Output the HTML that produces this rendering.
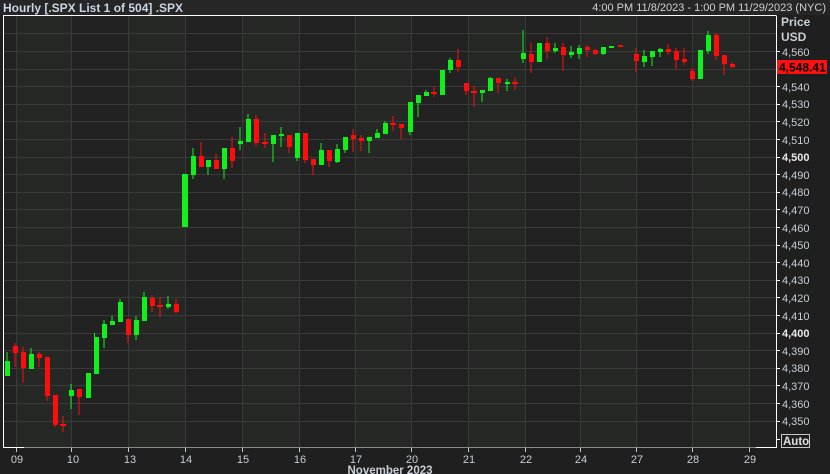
<!DOCTYPE html>
<html><head><meta charset="utf-8"><style>
html,body{margin:0;padding:0;background:#1f1f1f;width:830px;height:474px;overflow:hidden;font-family:"Liberation Sans",sans-serif}
svg{display:block}
</style></head><body>
<svg width="830" height="474" viewBox="0 0 830 474" xmlns="http://www.w3.org/2000/svg" font-family="Liberation Sans, sans-serif">
<rect width="830" height="474" fill="#1f1f1f"/>
<rect x="0" y="0" width="830" height="15" fill="#262626"/>
<text x="3" y="12" font-size="12" font-weight="bold" fill="#c9d6e3">Hourly [.SPX List 1 of 504] .SPX</text>
<text x="826" y="11" font-size="11" fill="#d0d0d0" text-anchor="end">4:00 PM 11/8/2023 - 1:00 PM 11/29/2023 (NYC)</text>
<!-- plot bg -->
<rect x="3" y="15" width="773" height="432" fill="#222222"/>
<g fill="#252825">
<rect x="16" y="16" width="55" height="431"/>
<rect x="128" y="16" width="57" height="431"/>
<rect x="242" y="16" width="57" height="431"/>
<rect x="355" y="16" width="56" height="431"/>
<rect x="468" y="16" width="57" height="431"/>
<rect x="580" y="16" width="56" height="431"/>
<rect x="692" y="16" width="57" height="431"/>
</g>
<g stroke="#3a3a3a" stroke-width="1">
<path d="M3 51.5H776M3 69.5H776M3 86.5H776M3 104.5H776M3 121.5H776M3 139.5H776M3 157.5H776M3 174.5H776M3 192.5H776M3 209.5H776M3 227.5H776M3 245.5H776M3 262.5H776M3 280.5H776M3 297.5H776M3 315.5H776M3 333.5H776M3 350.5H776M3 368.5H776M3 385.5H776M3 403.5H776M3 421.5H776M3 33.5H776"/>
<path d="M16.5 15V447M71.5 15V447M128.5 15V447M185.5 15V447M242.5 15V447M299.5 15V447M355.5 15V447M411.5 15V447M468.5 15V447M525.5 15V447M580.5 15V447M636.5 15V447M692.5 15V447M749.5 15V447"/>
</g>
<!-- frame -->
<path d="M3.5 15V447.5H776.5V15.5" stroke="#8a8a8a" fill="none"/>
<path d="M3.5 447V15.5H24" stroke="#ffffff" fill="none"/>
<path d="M3 447.5H24M3.5 447V15" stroke="#ffffff" fill="none"/>
<path d="M756 447.5H776.5V15.5M24 15.5H776" stroke="#ffffff" fill="none" stroke-width="1"/>
<!-- candles green -->
<g fill="#11f01c">
<g id="g"></g>
</g>
<g fill="#11f01c">
<rect x="6.5" y="352" width="1" height="24"/><rect x="5" y="361" width="5" height="15"/>
<rect x="30.5" y="348" width="1" height="21"/><rect x="29" y="354" width="5" height="15"/>
<rect x="70.5" y="384" width="1" height="25"/><rect x="69" y="390" width="5" height="6"/>
<rect x="86" y="373" width="5" height="25"/>
<rect x="94" y="333" width="1" height="41"/><rect x="94" y="337" width="5" height="37"/>
<rect x="103.5" y="320" width="1" height="28"/><rect x="102" y="324" width="5" height="14"/>
<rect x="111.5" y="316" width="1" height="9"/><rect x="110" y="321" width="5" height="4"/>
<rect x="119.5" y="299" width="1" height="23"/><rect x="118" y="302" width="5" height="20"/>
<rect x="135.5" y="316" width="1" height="24"/><rect x="134" y="320" width="5" height="15"/>
<rect x="143.5" y="292" width="1" height="29"/><rect x="142" y="297" width="5" height="24"/>
<rect x="167.5" y="296" width="1" height="13"/><rect x="166" y="304" width="5" height="3"/>
<rect x="182" y="174" width="6" height="53"/>
<rect x="192.5" y="148" width="1" height="31"/><rect x="191" y="156" width="5" height="19"/>
<rect x="207.5" y="160" width="1" height="15"/><rect x="206" y="160" width="5" height="7"/>
<rect x="223.5" y="148" width="1" height="31"/><rect x="222" y="148" width="5" height="21"/>
<rect x="239.5" y="127" width="1" height="23"/><rect x="238" y="141" width="5" height="3"/>
<rect x="247.5" y="114" width="1" height="28"/><rect x="246" y="119" width="5" height="23"/>
<rect x="272.5" y="135" width="1" height="27"/><rect x="271" y="135" width="5" height="9"/>
<rect x="280.5" y="127" width="1" height="20"/><rect x="279" y="134" width="5" height="2"/>
<rect x="296.5" y="133" width="1" height="28"/><rect x="295" y="133" width="5" height="25"/>
<rect x="320.5" y="143" width="1" height="22"/><rect x="319" y="150" width="5" height="15"/>
<rect x="336.5" y="144" width="1" height="19"/><rect x="335" y="149" width="5" height="13"/>
<rect x="344.5" y="137" width="1" height="16"/><rect x="343" y="137" width="5" height="13"/>
<rect x="368.5" y="137" width="1" height="16"/><rect x="367" y="137" width="5" height="4"/>
<rect x="376.5" y="129" width="1" height="9"/><rect x="375" y="133" width="5" height="5"/>
<rect x="384.5" y="121" width="1" height="13"/><rect x="383" y="123" width="5" height="11"/>
<rect x="409.5" y="102" width="1" height="33"/><rect x="408" y="102" width="5" height="30"/>
<rect x="417.5" y="95" width="1" height="22"/><rect x="416" y="95" width="5" height="8"/>
<rect x="425.5" y="90" width="1" height="6"/><rect x="424" y="92" width="5" height="4"/>
<rect x="440" y="70" width="5" height="25"/>
<rect x="449.5" y="58" width="1" height="15"/><rect x="448" y="60" width="5" height="10"/>
<rect x="481.5" y="90" width="1" height="12"/><rect x="480" y="90" width="5" height="3"/>
<rect x="489.5" y="77" width="1" height="14"/><rect x="488" y="78" width="5" height="13"/>
<rect x="506.5" y="79" width="1" height="12"/><rect x="505" y="82" width="5" height="2"/>
<rect x="522.5" y="30" width="1" height="33"/><rect x="521" y="53" width="5" height="6"/>
<rect x="537" y="43" width="5" height="19"/>
<rect x="554.5" y="43" width="1" height="10"/><rect x="553" y="48" width="5" height="3"/>
<rect x="570.5" y="46" width="1" height="12"/><rect x="569" y="52" width="5" height="3"/>
<rect x="578.5" y="45" width="1" height="14"/><rect x="577" y="48" width="5" height="6"/>
<rect x="602.5" y="47" width="1" height="8"/><rect x="601" y="47" width="5" height="7"/>
<rect x="609" y="46" width="5" height="2"/>
<rect x="643.5" y="50" width="1" height="17"/><rect x="642" y="56" width="5" height="6"/>
<rect x="651.5" y="51" width="1" height="15"/><rect x="650" y="51" width="5" height="6"/>
<rect x="659.5" y="48" width="1" height="9"/><rect x="658" y="49" width="5" height="3"/>
<rect x="698" y="50" width="5" height="29"/>
<rect x="707.5" y="31" width="1" height="23"/><rect x="706" y="35" width="5" height="16"/>
</g>
<g fill="#ff0d0d">
<rect x="14.5" y="343" width="1" height="24"/><rect x="13" y="346" width="5" height="7"/>
<rect x="22.5" y="347" width="1" height="36"/><rect x="21" y="352" width="5" height="16"/>
<rect x="38.5" y="352" width="1" height="15"/><rect x="37" y="354" width="5" height="4"/>
<rect x="46.5" y="357" width="1" height="44"/><rect x="45" y="357" width="5" height="39"/>
<rect x="54.5" y="395" width="1" height="32"/><rect x="53" y="395" width="5" height="30"/>
<rect x="62.5" y="416" width="1" height="16"/><rect x="60" y="424" width="6" height="2"/>
<rect x="78.5" y="389" width="1" height="26"/><rect x="77" y="389" width="5" height="8"/>
<rect x="127.5" y="319" width="1" height="24"/><rect x="126" y="319" width="5" height="16"/>
<rect x="151.5" y="295" width="1" height="17"/><rect x="150" y="298" width="5" height="8"/>
<rect x="159.5" y="297" width="1" height="20"/><rect x="157" y="305" width="6" height="2"/>
<rect x="175.5" y="299" width="1" height="15"/><rect x="174" y="304" width="5" height="8"/>
<rect x="200.5" y="142" width="1" height="25"/><rect x="199" y="156" width="5" height="11"/>
<rect x="215.5" y="154" width="1" height="15"/><rect x="214" y="160" width="5" height="9"/>
<rect x="231.5" y="137" width="1" height="31"/><rect x="230" y="148" width="5" height="13"/>
<rect x="255.5" y="115" width="1" height="31"/><rect x="254" y="119" width="5" height="24"/>
<rect x="264.5" y="133" width="1" height="15"/><rect x="262" y="142" width="6" height="2"/>
<rect x="288.5" y="135" width="1" height="18"/><rect x="287" y="135" width="5" height="12"/>
<rect x="304.5" y="133" width="1" height="30"/><rect x="303" y="133" width="5" height="27"/>
<rect x="312.5" y="159" width="1" height="16"/><rect x="311" y="159" width="5" height="6"/>
<rect x="328.5" y="150" width="1" height="17"/><rect x="327" y="150" width="5" height="11"/>
<rect x="352.5" y="129" width="1" height="23"/><rect x="351" y="135" width="5" height="4"/>
<rect x="360.5" y="135" width="1" height="16"/><rect x="359" y="138" width="5" height="3"/>
<rect x="392.5" y="116" width="1" height="15"/><rect x="390" y="123" width="6" height="2"/>
<rect x="400.5" y="124" width="1" height="15"/><rect x="399" y="124" width="5" height="4"/>
<rect x="433.5" y="87" width="1" height="10"/><rect x="431" y="92" width="6" height="2"/>
<rect x="457.5" y="49" width="1" height="23"/><rect x="456" y="60" width="5" height="7"/>
<rect x="465.5" y="83" width="1" height="12"/><rect x="464" y="83" width="5" height="8"/>
<rect x="473.5" y="86" width="1" height="21"/><rect x="471" y="91" width="6" height="2"/>
<rect x="497.5" y="78" width="1" height="15"/><rect x="496" y="78" width="5" height="5"/>
<rect x="514.5" y="77" width="1" height="13"/><rect x="512" y="82" width="6" height="2"/>
<rect x="530.5" y="43" width="1" height="30"/><rect x="529" y="54" width="5" height="8"/>
<rect x="546.5" y="37" width="1" height="22"/><rect x="545" y="43" width="5" height="8"/>
<rect x="562.5" y="43" width="1" height="28"/><rect x="561" y="47" width="5" height="8"/>
<rect x="586.5" y="45" width="1" height="12"/><rect x="585" y="47" width="5" height="3"/>
<rect x="594.5" y="49" width="1" height="6"/><rect x="593" y="50" width="5" height="4"/>
<rect x="618" y="45" width="5" height="2"/>
<rect x="635.5" y="48" width="1" height="24"/><rect x="634" y="54" width="5" height="7"/>
<rect x="667.5" y="44" width="1" height="11"/><rect x="666" y="49" width="5" height="3"/>
<rect x="675.5" y="48" width="1" height="21"/><rect x="674" y="51" width="5" height="9"/>
<rect x="683.5" y="48" width="1" height="17"/><rect x="682" y="59" width="5" height="3"/>
<rect x="691.5" y="68" width="1" height="13"/><rect x="690" y="71" width="5" height="8"/>
<rect x="715.5" y="33" width="1" height="27"/><rect x="714" y="35" width="5" height="21"/>
<rect x="723.5" y="55" width="1" height="20"/><rect x="722" y="55" width="5" height="9"/>
<rect x="731.5" y="62" width="1" height="6"/><rect x="730" y="64" width="5" height="3"/>
</g>
<!-- right axis -->
<g fill="#c8ced6" font-size="11">
<text x="781" y="26" font-weight="bold" font-size="12">Price</text>
<text x="781" y="41" font-weight="bold" font-size="12">USD</text>
<text x="782" y="56">4,560</text>
<text x="782" y="91">4,540</text>
<text x="782" y="108">4,530</text>
<text x="782" y="126">4,520</text>
<text x="782" y="144">4,510</text>
<text x="782" y="161" font-weight="bold" fill="#e8e8e8">4,500</text>
<text x="782" y="179">4,490</text>
<text x="782" y="196">4,480</text>
<text x="782" y="214">4,470</text>
<text x="782" y="232">4,460</text>
<text x="782" y="249">4,450</text>
<text x="782" y="267">4,440</text>
<text x="782" y="284">4,430</text>
<text x="782" y="302">4,420</text>
<text x="782" y="320">4,410</text>
<text x="782" y="337" font-weight="bold" fill="#e8e8e8">4,400</text>
<text x="782" y="355">4,390</text>
<text x="782" y="372">4,380</text>
<text x="782" y="390">4,370</text>
<text x="782" y="408">4,360</text>
<text x="782" y="425">4,350</text>
</g>
<path d="M776 51.5h4M776 86.5h4M776 104.5h4M776 121.5h4M776 139.5h4M776 157.5h4M776 174.5h4M776 192.5h4M776 209.5h4M776 227.5h4M776 245.5h4M776 262.5h4M776 280.5h4M776 297.5h4M776 315.5h4M776 333.5h4M776 350.5h4M776 368.5h4M776 385.5h4M776 403.5h4M776 421.5h4M776 439.5h4" stroke="#ffffff"/>
<rect x="777" y="60" width="50" height="14" fill="#ff1010"/>
<text x="779" y="71.5" font-size="12" font-weight="bold" fill="#000">4,548.41</text>
<rect x="781.5" y="434.5" width="28" height="13" fill="none" stroke="#c8c8c8"/>
<text x="783" y="445" font-size="11.5" font-weight="bold" fill="#e0e0e0">Auto</text>
<!-- bottom axis -->
<path d="M16.5 448v4M71.5 448v4M128.5 448v4M185.5 448v4M242.5 448v4M299.5 448v4M355.5 448v4M411.5 448v4M468.5 448v4M525.5 448v4M580.5 448v4M636.5 448v4M692.5 448v4M749.5 448v4" stroke="#c8c8c8"/>
<g fill="#c8ced6" font-size="11" text-anchor="middle">
<text x="17" y="463">09</text><text x="73" y="463">10</text><text x="130" y="463">13</text><text x="186" y="463">14</text><text x="243" y="463">15</text><text x="300" y="463">16</text><text x="356" y="463">17</text><text x="412" y="463">20</text><text x="469" y="463">21</text><text x="526" y="463">22</text><text x="581" y="463">24</text><text x="637" y="463">27</text><text x="693" y="463">28</text><text x="750" y="463">29</text>
<text x="390" y="474" font-weight="bold" font-size="11.5">November 2023</text>
</g>
</svg>
</body></html>
